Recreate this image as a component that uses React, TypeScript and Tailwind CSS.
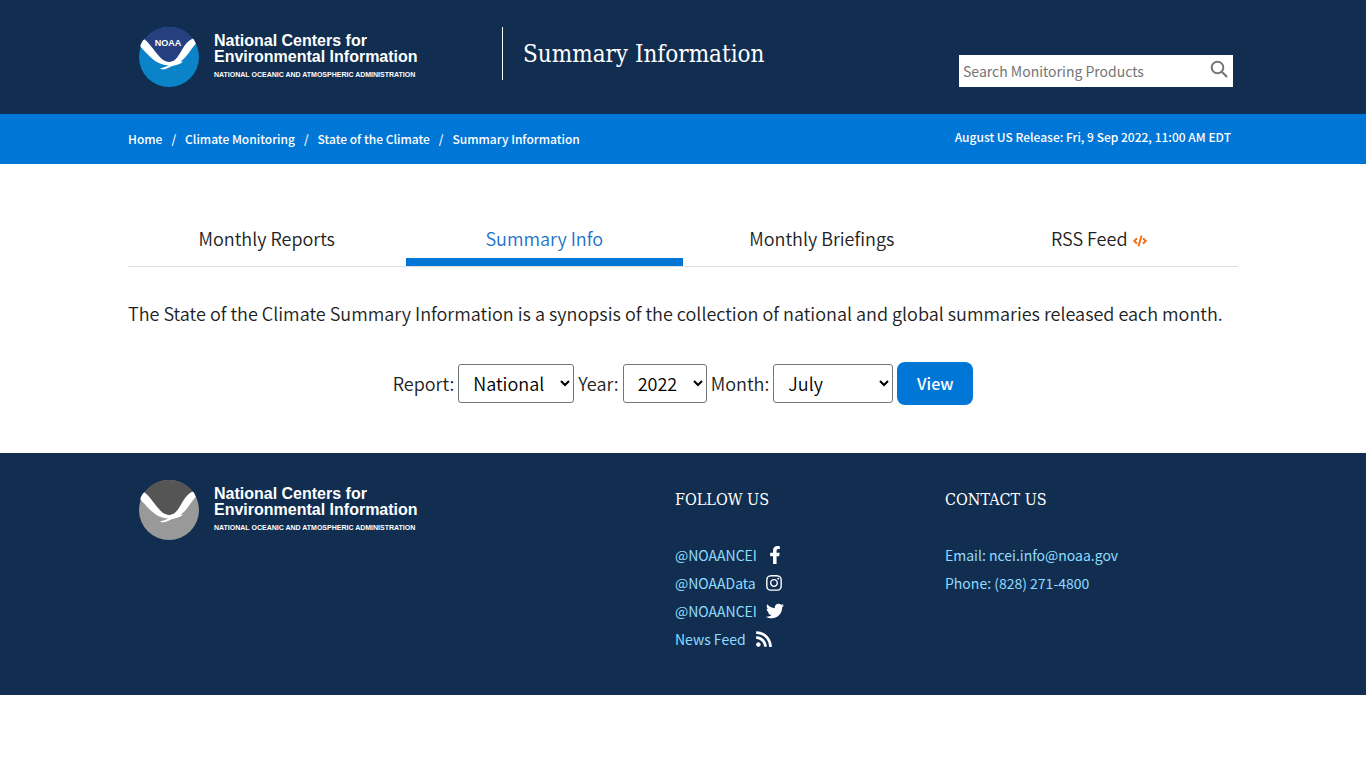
import { FaCode, FaFacebookF, FaInstagram, FaRss, FaTwitter } from 'react-icons/fa'

interface LogoProps {
  muted?: boolean
}

function Logo({ muted = false }: LogoProps) {
  const sky = muted ? '#555555' : '#263f7f'
  const sea = muted ? '#999999' : '#0b83c9'

  return (
    <a href="#" className="flex items-center gap-[15px] text-white">
      <svg viewBox="0 0 60 60" className="size-15 shrink-0" aria-hidden="true">
        <circle cx="30" cy="30" r="30" fill={sea} />
        <path
          d="M4.500 14.200A30 30 0 0 1 55.500 14.200C46 17 43 29 36 34C32 36.500 27 36 23 33C16 28 11 19 4.500 14.200Z"
          fill={sky}
        />
        <path
          d="M5.300 12.200C11 16 17 27 23.500 32.500C27.500 35.700 32.500 35.700 36 32.800C42 27.500 44.500 16 53.200 11.800L54.500 12C55.500 13.500 56.300 15 56.800 16.800C51.500 22.500 48 30.500 41.500 34.600L44 34.800C41 38 35.500 37.800 31 40C27.500 41.800 25 42.700 21.800 42.200L21.500 41.200C24.500 40.800 27.500 39.800 29.500 38.600C16 38 8.500 27 1.300 19.600C1.500 17 3.500 13.500 5.300 12.200Z"
          fill="#fff"
        />
        {!muted && (
          <text
            x="29"
            y="19"
            fill="#fff"
            fontFamily="Liberation Sans"
            fontSize="9"
            fontWeight="700"
            textAnchor="middle"
          >
            NOAA
          </text>
        )}
      </svg>
      <span className="flex flex-col font-['Liberation_Sans',sans-serif] font-bold">
        <span className="pt-[2px] text-[16px] leading-4">
          <span className="block">National Centers for</span>
          <span className="block">Environmental Information</span>
        </span>
        <span className="mt-[2px] text-[7px] leading-4">
          NATIONAL OCEANIC AND ATMOSPHERIC ADMINISTRATION
        </span>
      </span>
    </a>
  )
}

const crumbs = ['Home', 'Climate Monitoring', 'State of the Climate', 'Summary Information']

const tabs = [
  { label: 'Monthly Reports' },
  { label: 'Summary Info', active: true },
  { label: 'Monthly Briefings' },
  { label: 'RSS Feed', icon: <FaCode className="mt-[6px] size-[14px] text-[#f26f14]" /> },
]

const social = [
  { label: '@NOAANCEI', icon: FaFacebookF },
  { label: '@NOAAData', icon: FaInstagram },
  { label: '@NOAANCEI', icon: FaTwitter },
  { label: 'News Feed', icon: FaRss },
]

const months = [
  'January',
  'February',
  'March',
  'April',
  'May',
  'June',
  'July',
  'August',
  'September',
  'October',
  'November',
  'December',
]

const container = 'mx-auto w-full max-w-[1140px] px-[15px]'
const selectStyles =
  'h-[39px] rounded-[3px] border border-[#767676] bg-white pb-[2px] pl-[10px] font-[350] text-black'

function Header() {
  return (
    <header className="bg-[#112e51]">
      <div className={`${container} flex items-start pb-[27px] pt-[27px]`}>
        <div className="w-[374px] pl-[11px]">
          <Logo />
        </div>
        <h1 className="flex h-[53px] items-center border-l border-white pl-5 font-['DejaVu_Serif_Condensed','DejaVu_Serif',serif] text-[24px] text-white">
          Summary Information
        </h1>
        <form className="ml-auto mr-[5px] mt-7 flex h-8 w-[274px] bg-white">
          <input
            type="search"
            aria-label="Search Monitoring Products"
            placeholder="Search Monitoring Products"
            className="min-w-0 flex-1 pl-1 text-[14px] placeholder:text-[#757575]"
          />
          <button type="submit" aria-label="Search" className="px-[5px] pb-1">
            <svg viewBox="0 0 18 18" className="size-[18px]" fill="none" stroke="#757575">
              <circle cx="7.500" cy="7.500" r="5.800" strokeWidth="2" />
              <path d="M11.800 11.800L17 17" strokeWidth="2.200" />
            </svg>
          </button>
        </form>
      </div>
    </header>
  )
}

function Breadcrumbs() {
  return (
    <div className="bg-[#0076d6] text-white">
      <div className={`${container} flex h-[50px] items-center justify-between text-[12px] font-medium`}>
        <nav aria-label="Breadcrumb">
          <ol className="flex">
            {crumbs.map((crumb, i) => (
              <li key={crumb}>
                {i > 0 && <span className="px-[9px]">/</span>}
                <a href="#">{crumb}</a>
              </li>
            ))}
          </ol>
        </nav>
        <p className="mb-1 mr-[7px]">August US Release: Fri, 9 Sep 2022, 11:00 AM EDT</p>
      </div>
    </div>
  )
}

function Tabs() {
  return (
    <nav className="mt-12 border-b border-[#dddddd]">
      <ul className="grid grid-cols-4">
        {tabs.map(({ label, active, icon }) => (
          <li key={label}>
            <a
              href="#"
              className={`flex h-[54px] items-center justify-center gap-[6px] border-b-8 pt-[6px] ${
                active ? 'border-[#0076d6] text-[#1a6fcc]' : 'border-transparent'
              }`}
            >
              {label}
              {icon}
            </a>
          </li>
        ))}
      </ul>
    </nav>
  )
}

function ReportForm() {
  return (
    <form className="mt-[34px] flex items-center justify-center gap-1 pb-12">
      <label htmlFor="report">Report:</label>
      <select id="report" className={`${selectStyles} w-[116px]`}>
        <option>National</option>
        <option>Global</option>
      </select>
      <label htmlFor="year">Year:</label>
      <select id="year" className={`${selectStyles} w-[84px]`}>
        <option>2022</option>
        <option>2021</option>
      </select>
      <label htmlFor="month">Month:</label>
      <select id="month" defaultValue="July" className={`${selectStyles} w-[120px]`}>
        {months.map((month) => (
          <option key={month}>{month}</option>
        ))}
      </select>
      <button
        type="submit"
        className="h-[43px] w-[76px] rounded-lg bg-[#0076d6] pb-[2px] text-[16px] font-medium text-white"
      >
        View
      </button>
    </form>
  )
}

function Footer() {
  const heading =
    "font-['DejaVu_Serif_Condensed','DejaVu_Serif',serif] text-[16px] leading-6 text-white"

  return (
    <footer className="bg-[#112e51] text-[14px] leading-7 text-[#8fdcff]">
      <div className={`${container} flex items-start pb-[42px] pt-[27px]`}>
        <div className="w-[547px] pl-[11px]">
          <Logo muted />
        </div>
        <div className="w-[270px] pt-2">
          <h2 className={heading}>FOLLOW US</h2>
          <ul className="mt-[29px]">
            {social.map(({ label, icon: Icon }, i) => (
              <li key={i}>
                <a href="#" className="flex items-center gap-[9px]">
                  {label}
                  <Icon className="size-[18px] text-white" />
                </a>
              </li>
            ))}
          </ul>
        </div>
        <div className="pt-2">
          <h2 className={heading}>CONTACT US</h2>
          <ul className="mt-[29px]">
            <li>
              <a href="mailto:ncei.info@noaa.gov">Email: ncei.info@noaa.gov</a>
            </li>
            <li>
              <a href="tel:+18282714800">Phone: (828) 271-4800</a>
            </li>
          </ul>
        </div>
      </div>
    </footer>
  )
}

export default function App() {
  return (
    <div className="bg-white font-['Noto_Sans_CJK_SC',sans-serif] text-[18px] text-[#212121]">
      <Header />
      <Breadcrumbs />
      <main className={`${container} font-[350]`}>
        <Tabs />
        <p className="mt-[31px] leading-[30px]">
          The State of the Climate Summary Information is a synopsis of the collection of national
          and global summaries released each month.
        </p>
        <ReportForm />
      </main>
      <Footer />
    </div>
  )
}
